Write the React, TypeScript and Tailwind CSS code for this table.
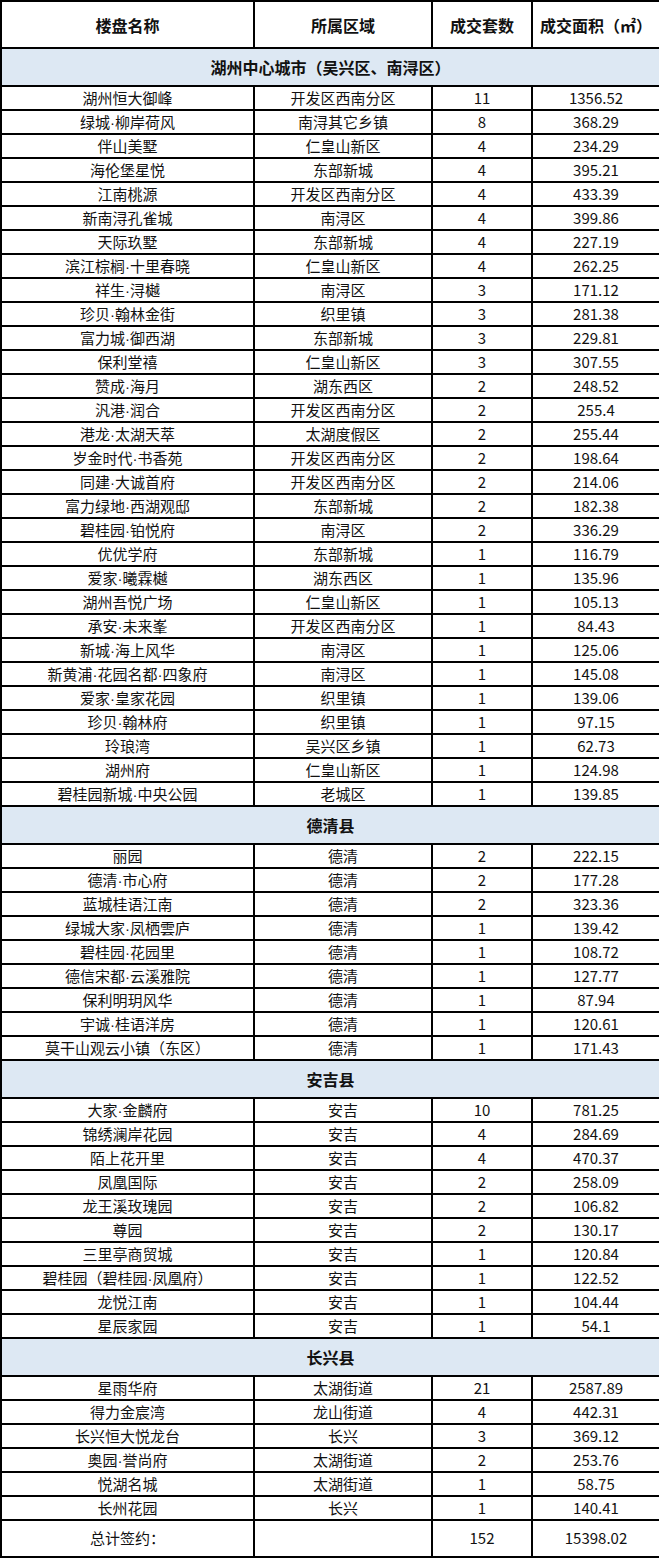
import React from "react";

type Row = [string, string, string, string];

const sections: { title: string; rows: Row[] }[] = [
  {
    title: "湖州中心城市（吴兴区、南浔区）",
    rows: [
      ["湖州恒大御峰", "开发区西南分区", "11", "1356.52"],
      ["绿城·柳岸荷风", "南浔其它乡镇", "8", "368.29"],
      ["伴山美墅", "仁皇山新区", "4", "234.29"],
      ["海伦堡星悦", "东部新城", "4", "395.21"],
      ["江南桃源", "开发区西南分区", "4", "433.39"],
      ["新南浔孔雀城", "南浔区", "4", "399.86"],
      ["天际玖墅", "东部新城", "4", "227.19"],
      ["滨江棕榈·十里春晓", "仁皇山新区", "4", "262.25"],
      ["祥生·浔樾", "南浔区", "3", "171.12"],
      ["珍贝·翰林金街", "织里镇", "3", "281.38"],
      ["富力城·御西湖", "东部新城", "3", "229.81"],
      ["保利堂禧", "仁皇山新区", "3", "307.55"],
      ["赞成·海月", "湖东西区", "2", "248.52"],
      ["汎港·润合", "开发区西南分区", "2", "255.4"],
      ["港龙·太湖天萃", "太湖度假区", "2", "255.44"],
      ["岁金时代·书香苑", "开发区西南分区", "2", "198.64"],
      ["同建·大诚首府", "开发区西南分区", "2", "214.06"],
      ["富力绿地·西湖观邸", "东部新城", "2", "182.38"],
      ["碧桂园·铂悦府", "南浔区", "2", "336.29"],
      ["优优学府", "东部新城", "1", "116.79"],
      ["爱家·曦霖樾", "湖东西区", "1", "135.96"],
      ["湖州吾悦广场", "仁皇山新区", "1", "105.13"],
      ["承安·未来峯", "开发区西南分区", "1", "84.43"],
      ["新城·海上风华", "南浔区", "1", "125.06"],
      ["新黄浦·花园名都·四象府", "南浔区", "1", "145.08"],
      ["爱家·皇家花园", "织里镇", "1", "139.06"],
      ["珍贝·翰林府", "织里镇", "1", "97.15"],
      ["玲琅湾", "吴兴区乡镇", "1", "62.73"],
      ["湖州府", "仁皇山新区", "1", "124.98"],
      ["碧桂园新城·中央公园", "老城区", "1", "139.85"],
    ],
  },
  {
    title: "德清县",
    rows: [
      ["丽园", "德清", "2", "222.15"],
      ["德清·市心府", "德清", "2", "177.28"],
      ["蓝城桂语江南", "德清", "2", "323.36"],
      ["绿城大家·凤栖雲庐", "德清", "1", "139.42"],
      ["碧桂园·花园里", "德清", "1", "108.72"],
      ["德信宋都·云溪雅院", "德清", "1", "127.77"],
      ["保利明玥风华", "德清", "1", "87.94"],
      ["宇诚·桂语洋房", "德清", "1", "120.61"],
      ["莫干山观云小镇（东区）", "德清", "1", "171.43"],
    ],
  },
  {
    title: "安吉县",
    rows: [
      ["大家·金麟府", "安吉", "10", "781.25"],
      ["锦绣澜岸花园", "安吉", "4", "284.69"],
      ["陌上花开里", "安吉", "4", "470.37"],
      ["凤凰国际", "安吉", "2", "258.09"],
      ["龙王溪玫瑰园", "安吉", "2", "106.82"],
      ["尊园", "安吉", "2", "130.17"],
      ["三里亭商贸城", "安吉", "1", "120.84"],
      ["碧桂园（碧桂园·凤凰府）", "安吉", "1", "122.52"],
      ["龙悦江南", "安吉", "1", "104.44"],
      ["星辰家园", "安吉", "1", "54.1"],
    ],
  },
  {
    title: "长兴县",
    rows: [
      ["星雨华府", "太湖街道", "21", "2587.89"],
      ["得力金宸湾", "龙山街道", "4", "442.31"],
      ["长兴恒大悦龙台", "长兴", "3", "369.12"],
      ["奥园·誉尚府", "太湖街道", "2", "253.76"],
      ["悦湖名城", "太湖街道", "1", "58.75"],
      ["长州花园", "长兴", "1", "140.41"],
    ],
  },
];

const cell = "border-2 border-black text-center align-middle p-0";

// the middle dot is narrow in the original, not the full-width CJK one
function Name({ text }: { text: string }) {
  const parts = text.split("·");
  return (
    <>
      {parts.map((p, i) => (
        <React.Fragment key={i}>
          {i > 0 && <span className="font-['Liberation_Sans',sans-serif]">·</span>}
          {p}
        </React.Fragment>
      ))}
    </>
  );
}

export default function App() {
  return (
    <div className="w-[659px] bg-white text-[#111] font-['Noto_Sans_CJK_SC',sans-serif]">
      <table className="w-[659px] table-fixed border-collapse">
        <colgroup>
          <col className="w-[253px]" />
          <col className="w-[178px]" />
          <col className="w-[100px]" />
          <col className="w-[128px]" />
        </colgroup>
        <thead>
          <tr className="h-[47px] text-[16px] font-bold">
            <th className={cell}>楼盘名称</th>
            <th className={cell}>所属区域</th>
            <th className={cell}>成交套数</th>
            <th className={cell}>成交面积（㎡）</th>
          </tr>
        </thead>
        <tbody>
          {sections.map((sec) => (
            <React.Fragment key={sec.title}>
              <tr className="h-[38px] bg-[#dde8f3] text-[16px] font-bold">
                <td colSpan={4} className={cell}>{sec.title}</td>
              </tr>
              {sec.rows.map((r) => (
                <tr key={r[0]} className="h-[24px] text-[15px] leading-[20px]">
                  {r.map((v, i) => (
                    <td key={i} className={cell}><Name text={v} /></td>
                  ))}
                </tr>
              ))}
            </React.Fragment>
          ))}
          <tr className="h-[37px] text-[15px]">
            <td className={cell}>总计签约：</td>
            <td className={cell}></td>
            <td className={cell}>152</td>
            <td className={cell}>15398.02</td>
          </tr>
        </tbody>
      </table>
    </div>
  );
}
